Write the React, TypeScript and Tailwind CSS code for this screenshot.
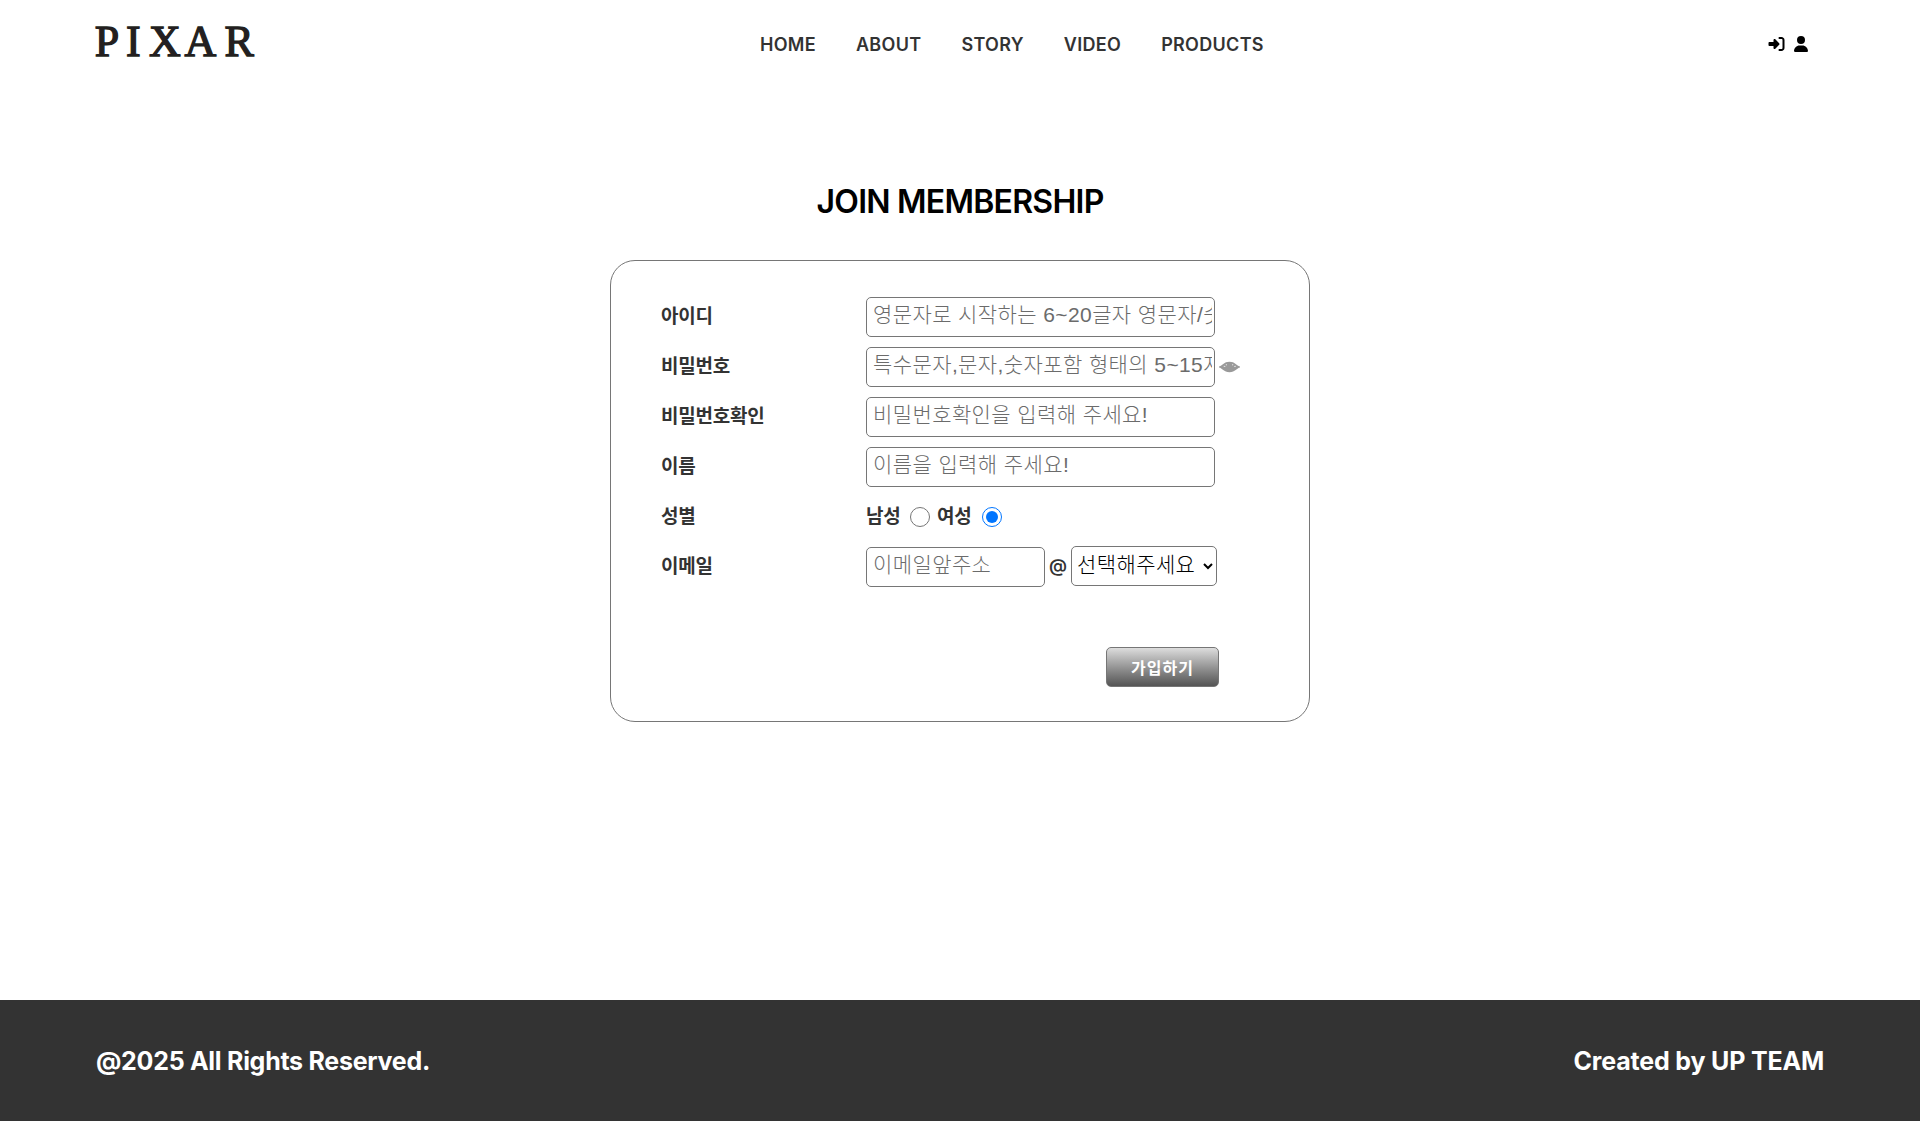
import type { ReactNode } from 'react';
import { FaRightToBracket, FaUser } from 'react-icons/fa6';

const field =
  "h-10 rounded-[5px] border border-[#767676] bg-white pl-[6px] pr-[2px] pb-[5px] text-[21px] tracking-[0.4px] text-black font-light placeholder:text-[#6b6b6b] font-['Liberation_Sans','Noto_Sans_CJK_KR',sans-serif]";

function Row({ label, children }: { label: string; children: ReactNode }) {
  return (
    <div className="flex h-[50px] items-center">
      <span className="w-[205px] shrink-0 whitespace-nowrap">{label}</span>
      <div className="flex items-center whitespace-nowrap">{children}</div>
    </div>
  );
}

function Eye() {
  return (
    <svg className="ml-[4px] h-[12px] w-[21px]" viewBox="0 0 20 12" preserveAspectRatio="none">
      <path d="M0 5.400C4 4.400 4.500 .7 10 .7s6 3.700 10 4.700v1.200C17 7 15.500 11.300 10 11.300S3 7 0 6.600Z" fill="#999" />
      <path d="M4.500 5.300l1.500.3M6.500 3.500l1 .6M12.500 4.100l1-.6M14.500 5.600l1.500-.3" stroke="#e5e5e5" strokeWidth="1" />
    </svg>
  );
}

export default function App() {
  return (
    <div className="flex h-[1121px] flex-col bg-white font-['Inter','Noto_Sans_CJK_KR',sans-serif] text-[#333]">
      <header className="flex h-[88px] items-center">
        <div className="w-[760px] pl-[94px]">
          <svg width="180" height="72" viewBox="0 0 180 72" role="img" aria-label="PIXAR">
            <text
              x="0.8 32 55 90.500 130.500"
              y="47.700"
              fill="#231f20"
              stroke="#231f20"
              strokeWidth="1.3"
              fontSize="44"
              fontFamily="Liberation Serif, serif"
            >
              PIXAR
            </text>
          </svg>
        </div>
        <nav className="flex gap-10 text-[18px] font-semibold tracking-[0.3px]">
          <a>HOME</a>
          <a>ABOUT</a>
          <a>STORY</a>
          <a>VIDEO</a>
          <a>PRODUCTS</a>
        </nav>
        <div className="mr-[112px] ml-auto flex gap-[9px] text-black">
          <FaRightToBracket className="h-4 w-[17px]" />
          <FaUser className="h-4 w-[14px]" />
        </div>
      </header>

      <main className="flex flex-1 flex-col items-center pt-[88px]">
        <h1 className="h-[84px] text-[32px] leading-[51px] font-semibold tracking-[-0.75px] text-black">JOIN MEMBERSHIP</h1>
        <form className="h-[462px] w-[700px] rounded-[25px] border border-[#767676] pt-[31px] pl-[50px] text-[19px] font-bold tracking-[-0.25px]">
          <Row label="아이디">
            <input className={`${field} w-[349px]`} placeholder="영문자로 시작하는 6~20글자 영문자/숫자" />
          </Row>
          <Row label="비밀번호">
            <input className={`${field} w-[349px]`} type="text" placeholder="특수문자,문자,숫자포함 형태의 5~15자리" />
            <Eye />
          </Row>
          <Row label="비밀번호확인">
            <input className={`${field} w-[349px]`} placeholder="비밀번호확인을 입력해 주세요!" />
          </Row>
          <Row label="이름">
            <input className={`${field} w-[349px]`} placeholder="이름을 입력해 주세요!" />
          </Row>
          <Row label="성별">
            <span className="w-[34px]">남성</span>
            <input type="radio" name="gender" className="ml-[10px] size-5" />
            <span className="ml-[7px] w-[35px]">여성</span>
            <input type="radio" name="gender" defaultChecked className="ml-[10px] size-5" />
          </Row>
          <Row label="이메일">
            <input className={`${field} w-[179px]`} placeholder="이메일앞주소" />
            <span className="w-[26px] pb-[3px] pl-[4px] text-[18px] font-semibold">@</span>
            <select className="mb-[2px] h-10 w-[146px] rounded-[5px] border border-[#767676] bg-white pb-[3px] pl-[1px] font-['Liberation_Sans','Noto_Sans_CJK_KR',sans-serif] text-[21px] font-light tracking-[0.4px] text-black">
              <option>선택해주세요</option>
            </select>
          </Row>
          <div className="mt-[55px] pl-[445px]">
            <button
              type="button"
              className="h-10 w-[113px] rounded-[5px] border border-[#767676] bg-linear-to-b from-[#ddd] to-[#555] pt-[3px] font-['Liberation_Sans','Noto_Sans_CJK_KR',sans-serif] text-[16px] font-bold tracking-[1px] text-white"
            >
              가입하기
            </button>
          </div>
        </form>
      </main>

      <footer className="flex h-[121px] items-center justify-between bg-[#333] px-[96px] pt-[2px] text-[25px] font-bold text-white">
        <span className="tracking-[-0.28px]">@2025 All Rights Reserved.</span>
        <span className="tracking-[-0.18px]">Created by UP TEAM</span>
      </footer>
    </div>
  );
}
